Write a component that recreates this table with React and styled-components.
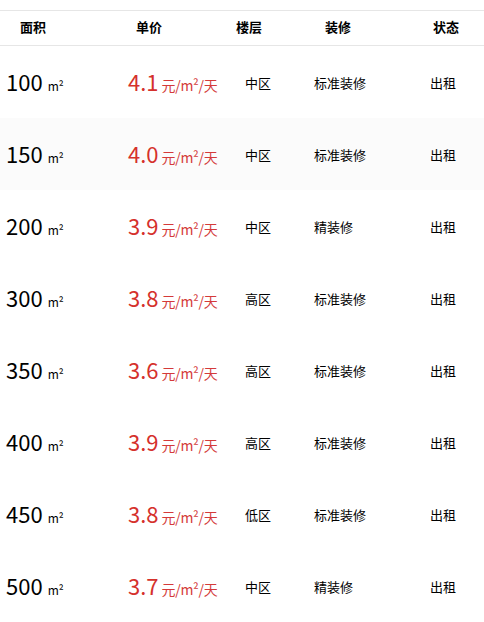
import React from 'react';
import styled, { createGlobalStyle } from 'styled-components';

const GlobalStyle = createGlobalStyle`
  body {
    margin: 0;
    background: #fff;
    font-family: "Noto Sans CJK SC", "Noto Sans", sans-serif;
    color: #000;
  }
`;

const COLS = '120px 115px 70px 115px 64px';

const Table = styled.div`
  width: 484px;
  padding-top: 10px;
`;

const Head = styled.div`
  display: grid;
  grid-template-columns: ${COLS};
  height: 36px;
  padding-bottom: 3px;
  box-sizing: border-box;
  align-items: center;
  border-top: 1px solid #e6e6e6;
  border-bottom: 1px solid #e6e6e6;
`;

const HeadCell = styled.div`
  padding-left: ${(p) => p.$pad}px;
  font-size: 13px;
  font-weight: bold;
  line-height: 1;
`;

const Row = styled.div`
  display: grid;
  grid-template-columns: ${COLS};
  height: 72px;
  align-items: center;
  background: ${(p) => (p.$hover ? '#fbfbfb' : '#fff')};
`;

const Cell = styled.div`
  padding-left: ${(p) => p.$pad}px;
  font-size: 13px;
  line-height: 1;
  white-space: nowrap;
`;

const Big = styled.span`
  font-size: 22px;
  line-height: 1;
`;

const Area = styled.div`
  padding-left: 6px;
  display: flex;
  align-items: baseline;
  gap: 5px;
  white-space: nowrap;
`;

const Unit = styled.span`
  font-size: 12px;
`;

const Price = styled.div`
  padding-left: 8px;
  display: flex;
  align-items: baseline;
  gap: 3px;
  color: #d5312c;
  white-space: nowrap;
`;

const PriceUnit = styled.span`
  font-size: 14px;
  letter-spacing: -0.3px;
  color: #d43a3a;
`;

const rows = [
  { area: 100, price: '4.1', floor: '中区', deco: '标准装修' },
  { area: 150, price: '4.0', floor: '中区', deco: '标准装修' },
  { area: 200, price: '3.9', floor: '中区', deco: '精装修' },
  { area: 300, price: '3.8', floor: '高区', deco: '标准装修' },
  { area: 350, price: '3.6', floor: '高区', deco: '标准装修' },
  { area: 400, price: '3.9', floor: '高区', deco: '标准装修' },
  { area: 450, price: '3.8', floor: '低区', deco: '标准装修' },
  { area: 500, price: '3.7', floor: '中区', deco: '精装修' },
];

const App = () => (
  <>
    <GlobalStyle />
    <Table>
      <Head>
        <HeadCell $pad={20}>面积</HeadCell>
        <HeadCell $pad={16}>单价</HeadCell>
        <HeadCell $pad={1}>楼层</HeadCell>
        <HeadCell $pad={20}>装修</HeadCell>
        <HeadCell $pad={13}>状态</HeadCell>
      </Head>
      {rows.map((r, i) => (
        <Row key={r.area} $hover={i === 1}>
          <Area>
            <Big>{r.area}</Big>
            <Unit>m²</Unit>
          </Area>
          <Price>
            <Big>{r.price}</Big>
            <PriceUnit>元/m²/天</PriceUnit>
          </Price>
          <Cell $pad={10}>{r.floor}</Cell>
          <Cell $pad={9}>{r.deco}</Cell>
          <Cell $pad={10}>出租</Cell>
        </Row>
      ))}
    </Table>
  </>
);

export default App;
